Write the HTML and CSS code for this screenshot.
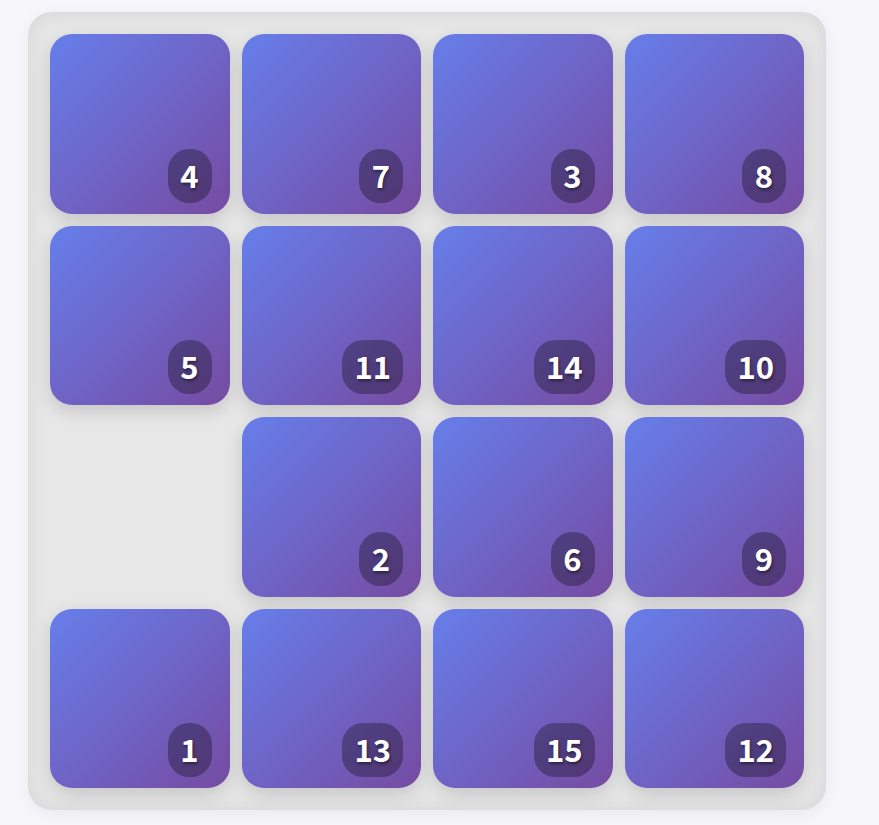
FILE: index.html
```html
<!DOCTYPE html>
<html lang="en">
<head>
<meta charset="utf-8">
<title>Sliding Puzzle</title>
<link rel="stylesheet" href="styles.css">
</head>
<body>
<main class="page">
  <div class="board">
    <div class="tile"><span class="num">4</span></div>
    <div class="tile"><span class="num">7</span></div>
    <div class="tile"><span class="num">3</span></div>
    <div class="tile"><span class="num">8</span></div>
    <div class="tile"><span class="num">5</span></div>
    <div class="tile"><span class="num">11</span></div>
    <div class="tile"><span class="num">14</span></div>
    <div class="tile"><span class="num">10</span></div>
    <div class="slot"></div>
    <div class="tile"><span class="num">2</span></div>
    <div class="tile"><span class="num">6</span></div>
    <div class="tile"><span class="num">9</span></div>
    <div class="tile"><span class="num">1</span></div>
    <div class="tile"><span class="num">13</span></div>
    <div class="tile"><span class="num">15</span></div>
    <div class="tile"><span class="num">12</span></div>
  </div>
</main>
</body>
</html>
```

FILE: styles.css
```css
* {
  box-sizing: border-box;
}

html, body {
  margin: 0;
  background: #f7f6fb;
}

.page {
  padding: 12px 0 0 28px;
  height: 825px;
  font-family: "Noto Sans CJK SC", "Noto Sans", sans-serif;
}

.board {
  width: 798px;
  height: 798px;
  padding: 22px;
  display: grid;
  grid-template-columns: repeat(4, 1fr);
  grid-template-rows: repeat(4, 1fr);
  gap: 12px;
  background: #e7e7e7;
  border-radius: 24px;
  box-shadow: inset 0 0 22px rgba(0, 0, 0, 0.08), 0 4px 18px rgba(0, 0, 0, 0.06);
}

.tile {
  border-radius: 22px;
  background: linear-gradient(135deg, #667eea 0%, #764ba2 100%);
  box-shadow: 0 6px 18px rgba(0, 0, 0, 0.15);
  display: flex;
  align-items: flex-end;
  justify-content: flex-end;
  padding: 0 18px 11px 0;
}

.slot {
  border-radius: 22px;
}

.num {
  height: 54px;
  min-width: 44px;
  padding: 0 12px 2px;
  border-radius: 21px;
  background: rgba(0, 0, 0, 0.3);
  color: #ffffff;
  font-size: 31px;
  font-weight: 700;
  line-height: 52px;
  text-align: center;
  text-shadow: 1px 2px 3px rgba(0, 0, 0, 0.45);
}
```
